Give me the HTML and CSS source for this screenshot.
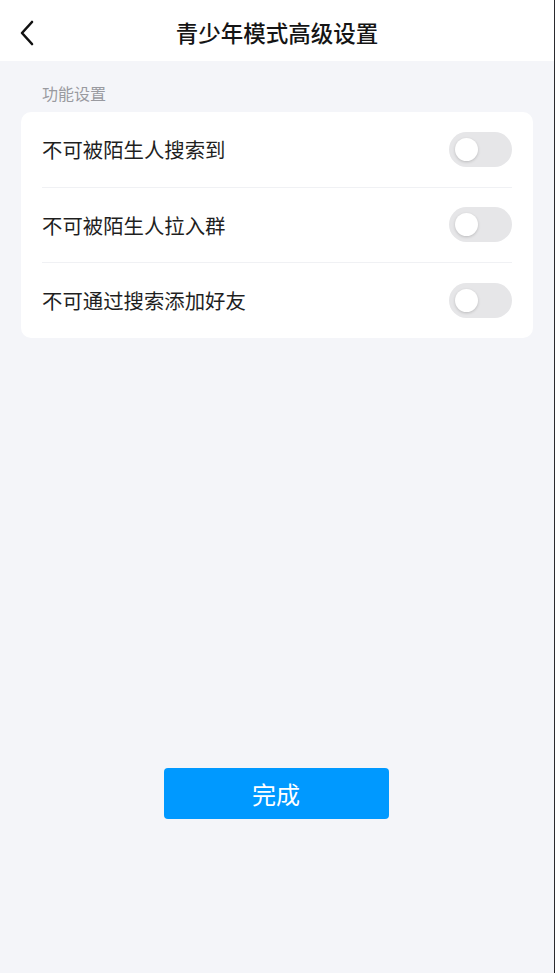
FILE: index.html
```html
<!DOCTYPE html>
<html lang="zh-CN">
<head>
  <meta charset="UTF-8" />
  <meta name="viewport" content="width=device-width, initial-scale=1.0"/>
  <title>青少年模式高级设置</title>
  <link rel="stylesheet" href="styles.css">
</head>
<body>
  <div class="page">
    <header class="topbar">
      <span class="back">
        <svg width="16" height="26" viewBox="0 0 16 26">
          <path d="M13 2 L3 13 L13 24" fill="none" stroke="#111" stroke-width="2.6" stroke-linecap="round" stroke-linejoin="round"/>
        </svg>
      </span>
      <h1 class="title">青少年模式高级设置</h1>
    </header>

    <main class="content">
      <p class="section-label">功能设置</p>
      <div class="card">
        <div class="row">
          <span class="row-text">不可被陌生人搜索到</span>
          <span class="switch"><span class="knob"></span></span>
        </div>
        <div class="row">
          <span class="row-text">不可被陌生人拉入群</span>
          <span class="switch"><span class="knob"></span></span>
        </div>
        <div class="row">
          <span class="row-text">不可通过搜索添加好友</span>
          <span class="switch"><span class="knob"></span></span>
        </div>
      </div>

      <div class="actions">
        <button class="btn">完成</button>
      </div>
    </main>
  </div>
</body>
</html>
```

FILE: styles.css
```css
html, body {
  margin: 0;
  padding: 0;
  height: 100%;
}
body {
  font-family: "Noto Sans CJK SC", "Noto Sans", sans-serif;
  background: #f4f5f9;
}
.page {
  min-height: 100%;
  border-right: 1px solid #2a2a2e;
  box-sizing: border-box;
  display: flex;
  flex-direction: column;
}
.topbar {
  height: 61px;
  background: #fff;
  display: flex;
  align-items: center;
  justify-content: center;
  position: relative;
}
.back {
  position: absolute;
  left: 19px;
  top: 20px;
  display: flex;
}
.title {
  margin: 0;
  font-size: 22.5px;
  font-weight: 500;
  color: #151515;
  margin-top: 3px;
}
.content {
  padding: 0 21px;
  flex: 1;
}
.section-label {
  margin: 0;
  padding: 19px 0 0 21px;
  height: 32px;
  font-size: 16px;
  line-height: 26px;
  color: #999aa0;
}
.card {
  background: #fff;
  border-radius: 10px;
  padding: 0 21px;
}
.row {
  height: 74.5px;
  display: flex;
  align-items: center;
  justify-content: space-between;
  border-bottom: 1px solid #f0f1f4;
}
.row:last-child {
  border-bottom: none;
}
.row-text {
  font-size: 20.4px;
  color: #1f1f1f;
}
.switch {
  width: 63px;
  height: 35px;
  border-radius: 18px;
  background: #e6e6e8;
  display: flex;
  align-items: center;
  padding-left: 6px;
  box-sizing: border-box;
}
.knob {
  width: 23px;
  height: 23px;
  border-radius: 50%;
  background: #fff;
  box-shadow: 0 1px 3px rgba(0, 0, 0, 0.18);
}
.actions {
  display: flex;
  justify-content: center;
  padding-top: 430px;
}
.btn {
  width: 225px;
  height: 51px;
  border: none;
  border-radius: 4px;
  background: #0099ff;
  color: #fff;
  font-family: inherit;
  font-size: 24px;
  margin-left: -2px;
}
```
